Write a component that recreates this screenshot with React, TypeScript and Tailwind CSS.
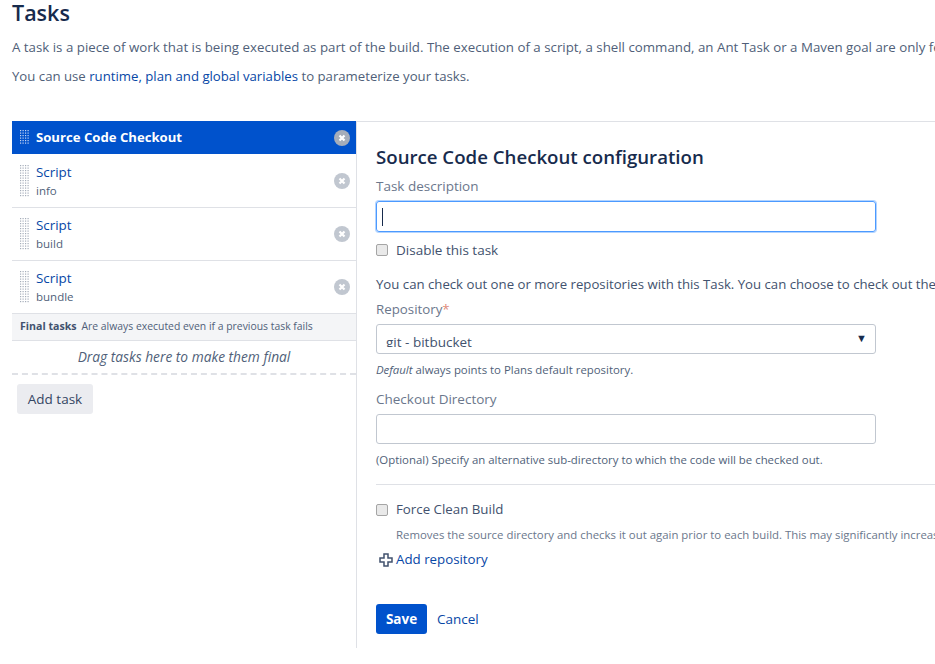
const font = { fontFamily: '"Open Sans", "Noto Sans", sans-serif' }

function Grip({ light, rows = 13 }: { light?: boolean; rows?: number }) {
  const dots = []
  for (let y = 0; y < rows; y++) {
    for (let x = 0; x < 4; x++) {
      dots.push(<rect key={`${x}-${y}`} x={x * 2.5} y={y * 2.5} width="1.2" height="1.2" />)
    }
  }
  return (
    <svg width="9" height={rows * 2.5} viewBox={`0 0 9 ${rows * 2.5}`} fill={light ? '#c7d6f2' : '#a5adba'} className="shrink-0">
      {dots}
    </svg>
  )
}

function Remove({ active }: { active?: boolean }) {
  return (
    <svg width="16" height="16" viewBox="0 0 16 16" className="shrink-0">
      <circle cx="8" cy="8" r="8" fill={active ? '#a5adba' : '#c1c7d0'} />
      <path d="M5.5 5.5l5 5M10.5 5.5l-5 5" stroke="#fff" strokeWidth="2.2" />
    </svg>
  )
}

function TaskRow({ sub }: { sub: string }) {
  return (
    <div className="flex h-[53px] items-center border-b border-[#dfe1e6] pl-2 pr-[6px]">
      <Grip />
      <div className="ml-[7px] flex-1">
        <div className="text-[13.4px] leading-[18px] text-[#0747a6]">Script</div>
        <div className="text-[11.5px] leading-[19px] text-[#505f79]">{sub}</div>
      </div>
      <Remove />
    </div>
  )
}

export default function App() {
  return (
    <div className="h-[664px] w-[935px] overflow-hidden bg-white text-[13.5px] text-[#505f79] whitespace-nowrap" style={font}>
      <div className="h-[121px] pl-3">
        <h1 className="text-[21.5px] leading-[26px] font-semibold text-[#172b4d]">Tasks</h1>
        <p className="mt-[12px] text-[13.3px] leading-[18px] text-[#505f79]">
          A task is a piece of work that is being executed as part of the build. The execution of a script, a shell command, an Ant Task or a Maven goal are only few
        </p>
        <p className="mt-[10px] text-[13.2px] leading-[20px]">
          You can use <a className="text-[#0747a6]">runtime, plan and global variables</a> to parameterize your tasks.
        </p>
      </div>
      <div className="flex">
        <div className="ml-3 h-[527px] w-[345px] shrink-0 border-r border-[#dfe1e6]">
          <div className="mb-px flex h-[33px] items-center bg-[#0052cc] pl-2 pr-[6px]">
            <Grip light rows={6} />
            <span className="ml-[7px] flex-1 pt-px text-[13.15px] font-bold text-white">Source Code Checkout</span>
            <Remove active />
          </div>
          <TaskRow sub="info" />
          <TaskRow sub="build" />
          <TaskRow sub="bundle" />
          <div className="flex h-[27px] items-center gap-[5px] border-b border-[#dfe1e6] bg-[#f4f5f7] pl-2 text-[10.4px]">
            <b className="text-[10.6px] font-bold text-[#42526e]">Final tasks</b>
            <span>Are always executed even if a previous task fails</span>
          </div>
          <div className="flex h-[34px] items-center justify-center border-b-2 border-dashed border-[#dfe1e6] text-[13.75px] italic">
            Drag tasks here to make them final
          </div>
          <button className="mt-[9px] ml-[5px] h-[30px] w-[76px] rounded-[3px] bg-[#ebecf0] text-[#344563]">Add task</button>
        </div>
        <div className="flex-1 overflow-hidden border-t border-[#dfe1e6] pt-[22px] pl-[19px]">
          <h2 className="text-[18.65px] leading-[26px] font-semibold text-[#172b4d]">Source Code Checkout configuration</h2>
          <label className="mt-[7px] block leading-[18px] text-[#6b778c]">Task description</label>
          <div className="mt-[6px] flex h-[31px] w-[500px] items-center rounded-[3px] border border-[#4c9aff] pl-[5px] shadow-[0_0_0_1px_#b3d4ff]">
            <span className="h-[18px] w-px bg-[#172b4d]" />
          </div>
          <label className="mt-[9px] flex h-[18px] items-center text-[#42526e]">
            <input type="checkbox" className="m-0 h-3 w-3 appearance-none rounded-[2px] border border-[#a5a5a5] bg-[#e9e9e9]" />
            <span className="ml-2">Disable this task</span>
          </label>
          <p className="mt-[15px] text-[13.2px] leading-[20px] text-[#42526e]">
            You can check out one or more repositories with this Task. You can choose to check out the
          </p>
          <label className="mt-[5px] block text-[13.3px] leading-[20px] text-[#6b778c]">
            Repository<span className="text-[#e08a7a]">*</span>
          </label>
          <div className="relative mt-[5px] h-[30px] w-[500px] rounded-[3px] border border-[#c1c7d0] text-[#42526e]">
            <div className="h-[22px] overflow-hidden pl-[9px] pt-[4px] leading-[26px]">git - bitbucket</div>
            <span className="absolute top-[3px] right-[8px] text-[11px] leading-[20px] text-[#172b4d]">▼</span>
          </div>
          <p className="mt-[8px] text-[11.4px] leading-[16px]"><i>Default</i> always points to Plans default repository.</p>
          <label className="mt-[11px] block leading-[20px] text-[#6b778c]">Checkout Directory</label>
          <div className="mt-[5px] h-[30px] w-[500px] rounded-[3px] border border-[#c1c7d0]" />
          <p className="mt-[8px] text-[11.4px] leading-[16px]">(Optional) Specify an alternative sub-directory to which the code will be checked out.</p>
          <div className="mt-[16px] border-t border-[#dfe1e6]" />
          <label className="mt-[16px] flex h-[18px] items-center text-[13.3px] text-[#42526e]">
            <input type="checkbox" className="m-0 h-3 w-3 appearance-none rounded-[2px] border border-[#a5a5a5] bg-[#e9e9e9]" />
            <span className="ml-2">Force Clean Build</span>
          </label>
          <p className="mt-[8px] ml-5 text-[11.4px] leading-[16px] text-[#6b778c]">
            Removes the source directory and checks it out again prior to each build. This may significantly increase
          </p>
          <div className="mt-[7px] flex h-[20px] items-center text-[13.3px] text-[#0747a6]">
            <svg width="14" height="14" viewBox="0 0 14 14" className="mr-[3px] ml-[3px] shrink-0">
              <path d="M5 1h4v4h4v4H9v4H5V9H1V5h4z" fill="#fff" stroke="#42526e" strokeWidth="1.5" />
            </svg>
            Add repository
          </div>
          <div className="mt-[34px] flex items-center">
            <button className="h-[30px] w-[51px] rounded-[3px] bg-[#0052cc] font-bold text-white">Save</button>
            <a className="ml-[10px] text-[#0747a6]">Cancel</a>
          </div>
        </div>
      </div>
    </div>
  )
}
